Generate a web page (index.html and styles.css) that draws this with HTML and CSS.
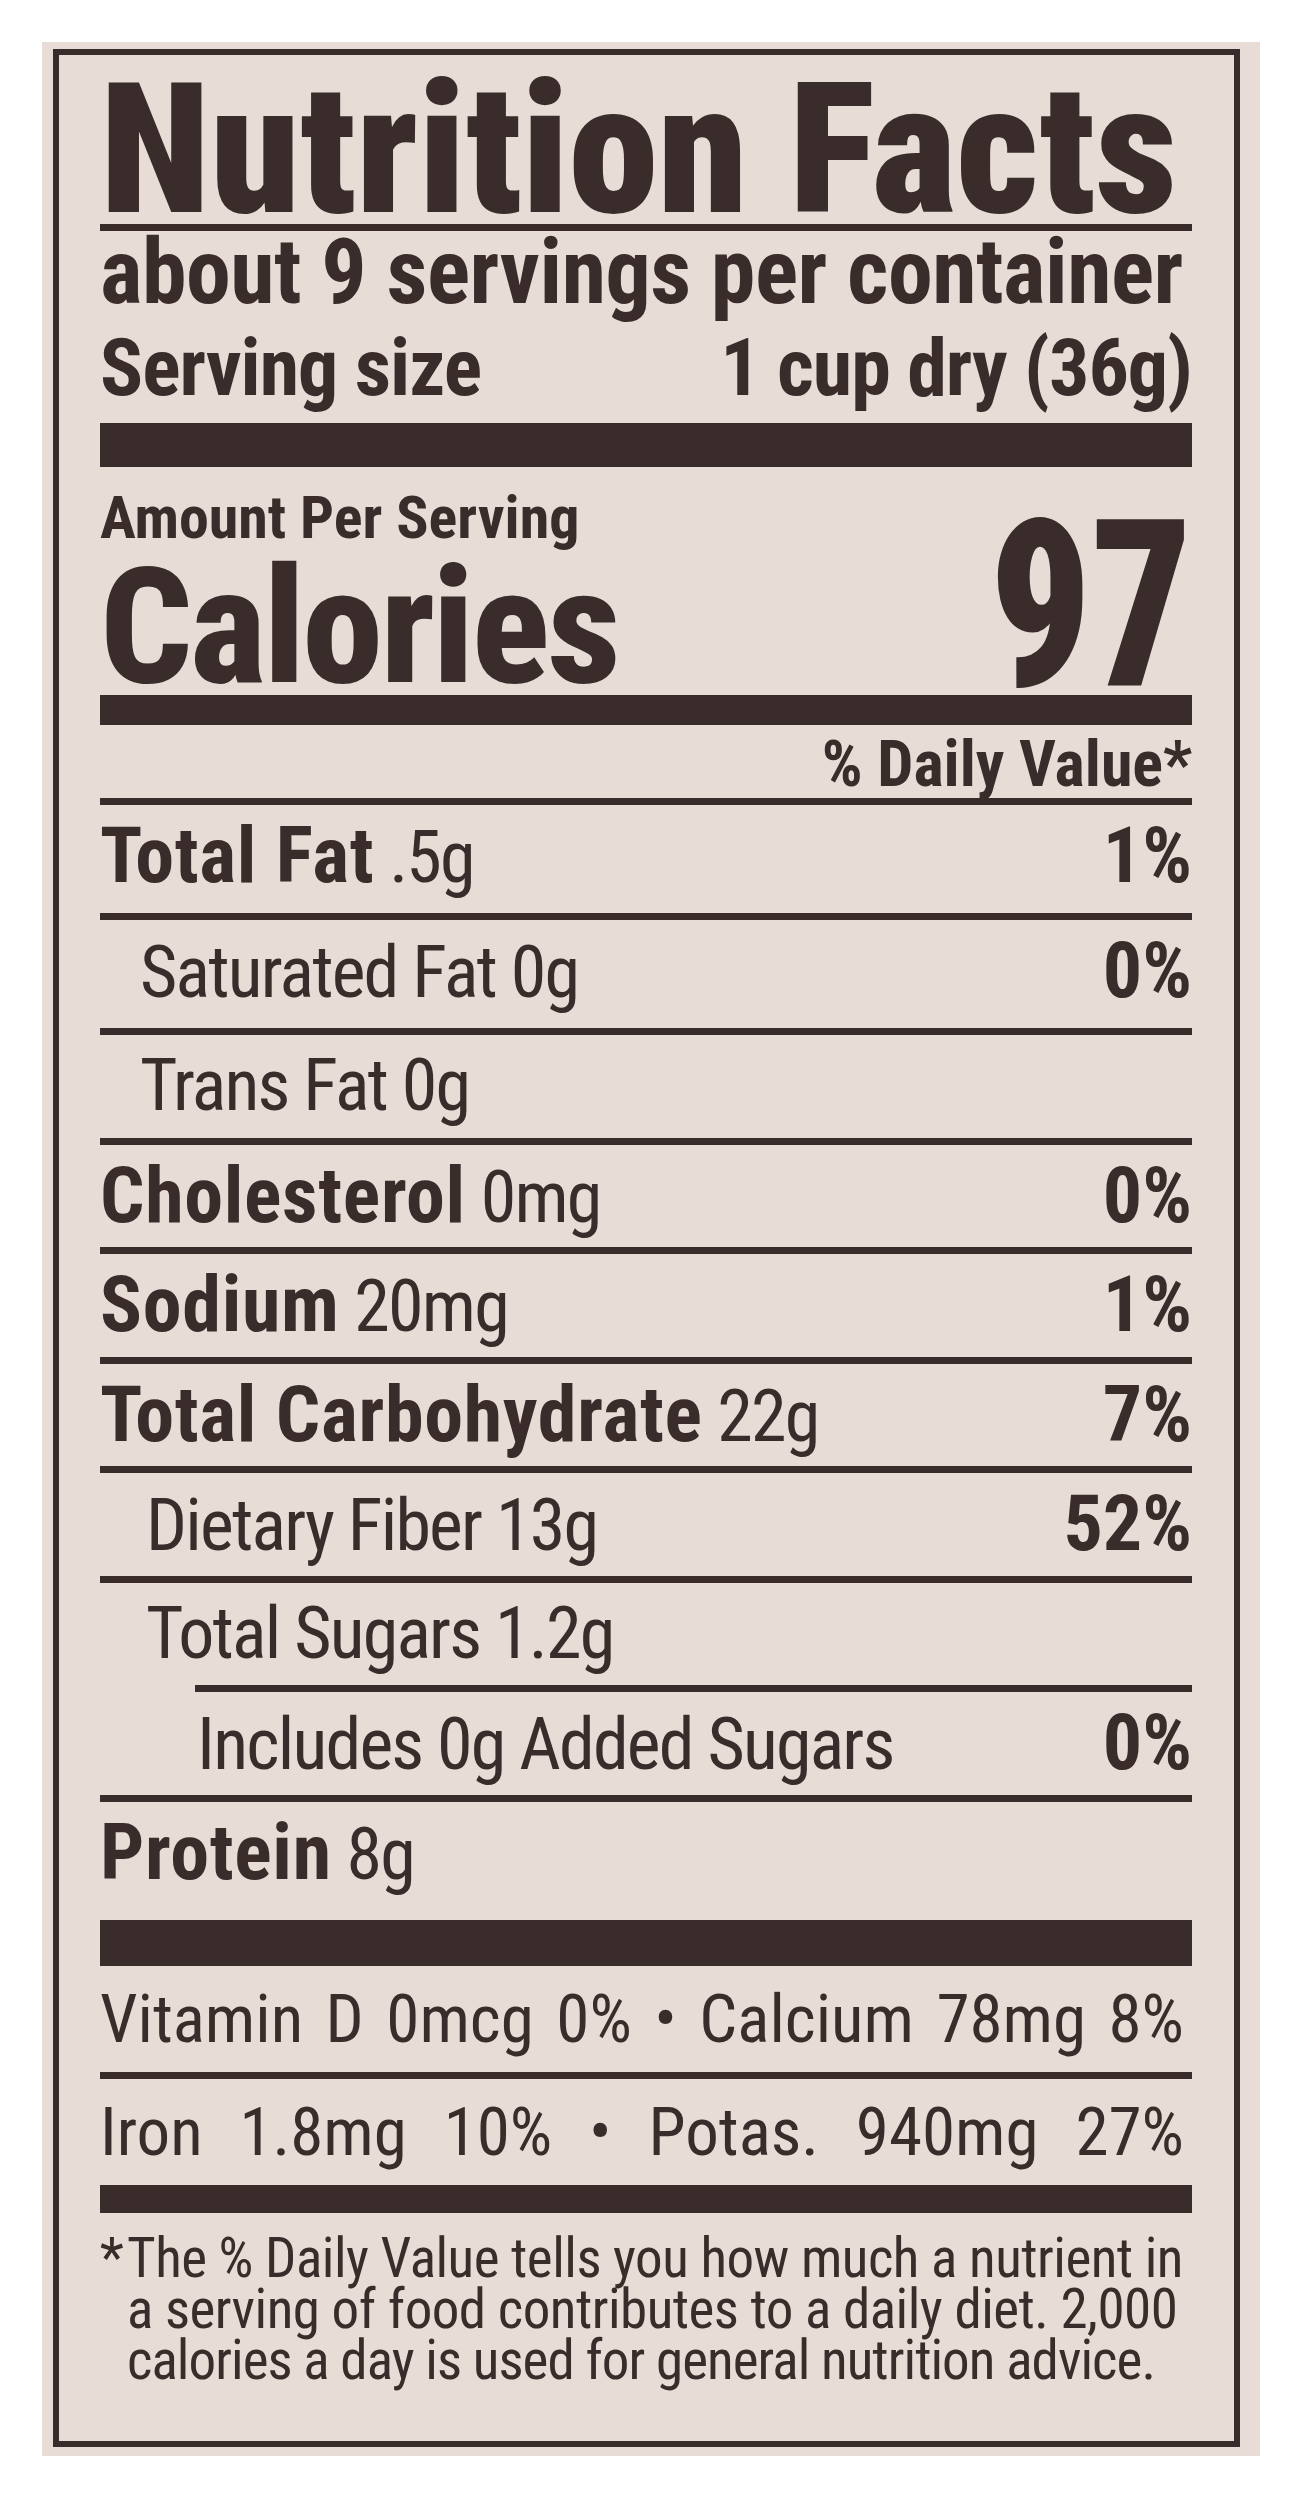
FILE: index.html
```html
<!DOCTYPE html>
<html lang="en">
<head>
<meta charset="utf-8">
<title>Nutrition Facts</title>
<link rel="stylesheet" href="styles.css">
</head>
<body>
<div class="paper">
  <section class="label">
    <h1 class="title">Nutrition Facts</h1>
    <p class="servings">about 9 servings per container</p>
    <div class="serving-size"><span>Serving size</span><span>1 cup dry (36g)</span></div>
    <div class="bar bar-xl"></div>
    <div class="calories">
      <div class="cal-left">
        <div class="amount">Amount Per Serving</div>
        <div class="cal-label">Calories</div>
      </div>
      <div class="cal-value">97</div>
    </div>
    <div class="bar bar-lg"></div>
    <div class="dv-head">% Daily Value*</div>
    <div class="row tall"><span class="name"><b>Total Fat</b> .5g</span><b class="dv">1%</b></div>
    <div class="row tall indent1"><span class="name">Saturated Fat 0g</span><b class="dv">0%</b></div>
    <div class="row indent1"><span class="name">Trans Fat 0g</span></div>
    <div class="row"><span class="name"><b>Cholesterol</b> 0mg</span><b class="dv">0%</b></div>
    <div class="row"><span class="name"><b>Sodium</b> 20mg</span><b class="dv">1%</b></div>
    <div class="row"><span class="name"><b>Total Carbohydrate</b> 22g</span><b class="dv">7%</b></div>
    <div class="row indent1b"><span class="name">Dietary Fiber 13g</span><b class="dv">52%</b></div>
    <div class="row indent1b"><span class="name">Total Sugars 1.2g</span></div>
    <div class="row indent2"><span class="name">Includes 0g Added Sugars</span><b class="dv">0%</b></div>
    <div class="row protein"><span class="name"><b>Protein</b> 8g</span></div>
    <div class="bar bar-md"></div>
    <p class="mineral">Vitamin D 0mcg 0% • Calcium 78mg 8%</p>
    <p class="mineral ruled">Iron 1.8mg 10% • Potas. 940mg 27%</p>
    <div class="bar bar-sm"></div>
    <p class="footnote"><span class="star">*</span>The % Daily Value tells you how much a nutrient in<br>a serving of food contributes to a daily diet. 2,000<br><span class="tight">calories a day is used for general nutrition advice.</span></p>
  </section>
</div>
</body>
</html>
```

FILE: styles.css
```css
* {
  box-sizing: border-box;
}

body {
  margin: 0;
  background: #ffffff;
  color: #3a2c2a;
  font-family: "Roboto", "Roboto Condensed", sans-serif;
  font-stretch: 75%;
}

.paper {
  margin: 42px 0 0 42px;
  width: 1218px;
  height: 2414px;
  padding: 7px 20px 9px 11px;
  background: #e7dcd6;
}

.label {
  height: 100%;
  border: 6px solid #3a2c2a;
  padding: 22px 42px 0 41px;
}

.title {
  margin: 0;
  font-size: 181px;
  line-height: 147px;
  font-weight: 900;
  letter-spacing: -0.2px;
  white-space: nowrap;
  border-bottom: 7px solid #3a2c2a;
}

.servings {
  margin: 0;
  padding-top: 2px;
  font-size: 90px;
  line-height: 80px;
  font-weight: 700;
  letter-spacing: -0.5px;
  white-space: nowrap;
}

.serving-size {
  display: flex;
  justify-content: space-between;
  font-size: 80px;
  line-height: 110px;
  font-weight: 700;
  letter-spacing: -1px;
  white-space: nowrap;
}

.bar {
  background: #3a2c2a;
}

.bar-xl {
  height: 44px;
}

.bar-lg {
  height: 30px;
  margin-top: 3px;
}

.bar-md {
  height: 46px;
}

.bar-sm {
  height: 28px;
}

.calories {
  display: flex;
  justify-content: space-between;
  align-items: flex-end;
  padding-top: 7px;
  font-weight: 700;
}

.amount {
  font-size: 60px;
  line-height: 88px;
}

.cal-label {
  font-size: 162px;
  line-height: 130px;
  font-weight: 800;
  letter-spacing: -2.5px;
}

.cal-value {
  font-size: 233px;
  line-height: 170px;
  font-weight: 900;
  transform: scaleX(0.85);
  transform-origin: right bottom;
}

.dv-head {
  text-align: right;
  font-size: 64px;
  line-height: 67px;
  padding-top: 6px;
  font-weight: 700;
}

.row {
  display: flex;
  justify-content: space-between;
  align-items: baseline;
  height: 109.5px;
  border-top: 7px solid #3a2c2a;
  padding-top: 11px;
  font-size: 72px;
  line-height: 80px;
  letter-spacing: -1.8px;
  white-space: nowrap;
}

.row b {
  font-size: 78px;
  letter-spacing: 0.7px;
}

.row .dv {
  letter-spacing: 0;
}

.row.tall {
  height: 115px;
}

.row.indent1 {
  padding-left: 40px;
}

.row.indent1b {
  padding-left: 46px;
}

.row.indent2 {
  margin-left: 95px;
  padding-left: 2px;
}

.row.protein {
  height: 125.5px;
}

.mineral {
  margin: 0;
  height: 106px;
  padding: 13px 8px 0 0;
  font-size: 67px;
  line-height: 80px;
  text-align: justify;
  text-align-last: justify;
  white-space: nowrap;
}

.mineral.ruled {
  height: 113px;
  border-top: 7px solid #3a2c2a;
}

.footnote {
  margin: 0;
  padding: 20px 0 0 27px;
  text-indent: -27px;
  font-size: 55px;
  line-height: 51px;
  letter-spacing: -0.5px;
  white-space: nowrap;
}

.star {
  display: inline-block;
  width: 27px;
  text-indent: 0;
}

.tight {
  letter-spacing: -0.95px;
}
```
